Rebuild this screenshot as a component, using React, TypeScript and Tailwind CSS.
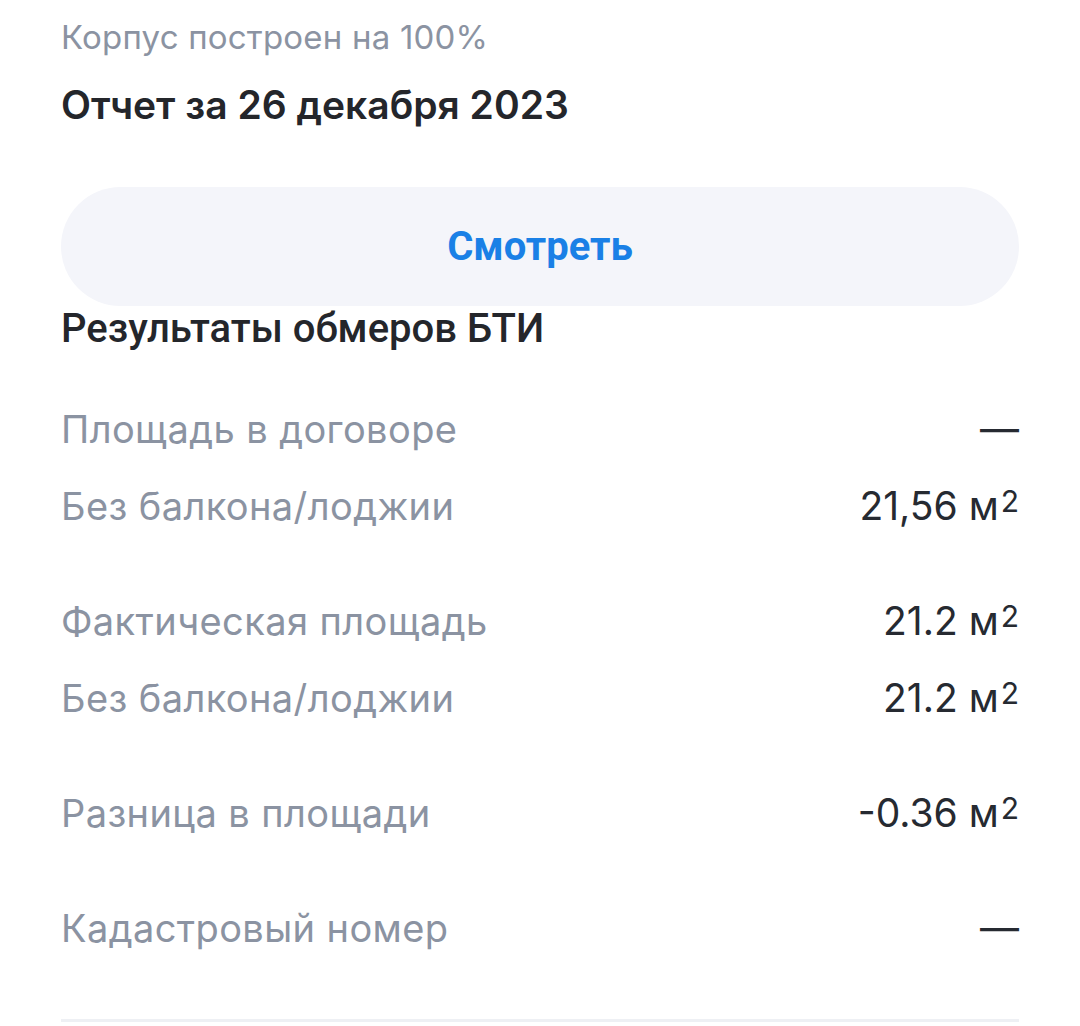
import React from "react";

const Row = ({ label, value, sup = false }: { label: string; value: string; sup?: boolean }) => (
  <div className="flex h-[77px] items-center justify-between">
    <span className="text-[38px] tracking-[0.4px] text-[#8b93a2]">{label}</span>
    <span className="text-[39px] text-[#262a31]">
      {value}
      {sup && <sup className="relative top-[-8px] ml-[2px] text-[30px]">2</sup>}
    </span>
  </div>
);

export default function App() {
  return (
    <div className="min-h-[1026px] bg-white px-[61px] pt-[15px]" style={{ fontFamily: "Inter, 'Noto Sans', sans-serif" }}>
      <div className="text-[33px] leading-[44px] tracking-[0.2px] text-[#8b93a2]">Корпус построен на 100%</div>
      <div className="mt-[22px] text-[39px] font-semibold leading-[48px] text-[#24262b]">Отчет за 26 декабря 2023</div>
      <button className="mt-[58px] flex h-[119px] w-full items-center justify-center rounded-full bg-[#f4f5fa]">
        <span className="text-[40px] font-bold text-[#1a80e6]" style={{ fontFamily: "Roboto, sans-serif" }}>Смотреть</span>
      </button>
      <div className="mt-[1px] text-[40px] font-medium leading-[44px] text-[#24262b]" style={{ fontFamily: "Roboto, sans-serif" }}>
        Результаты обмеров БТИ
      </div>
      <div className="mt-[40px] flex flex-col gap-[38px]">
        <div>
          <Row label="Площадь в договоре" value="—" />
          <Row label="Без балкона/лоджии" value="21,56 м" sup />
        </div>
        <div>
          <Row label="Фактическая площадь" value="21.2 м" sup />
          <Row label="Без балкона/лоджии" value="21.2 м" sup />
        </div>
        <Row label="Разница в площади" value="-0.36 м" sup />
        <Row label="Кадастровый номер" value="—" />
      </div>
      <div className="mt-[52px] h-[3px] bg-[#eef0f4]" />
    </div>
  );
}
